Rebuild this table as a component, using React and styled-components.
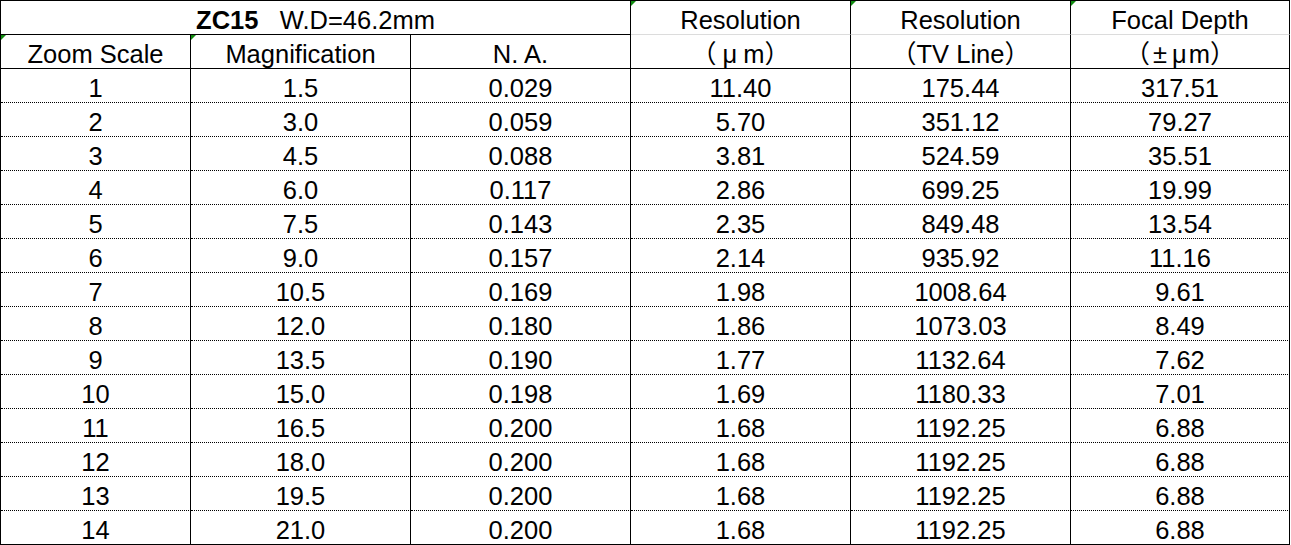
import styled, { createGlobalStyle } from 'styled-components';

const GlobalStyle = createGlobalStyle`
    html, body {
        margin: 0;
        padding: 0;
        background: #ffffff;
    }
`;

const Sheet = styled.div`
    display: grid;
    grid-template-columns: 190px 220px 220px 220px 220px 219px;
    grid-auto-rows: 34px;
    width: max-content;
    border-left: 1px solid #000;
    border-top: 1px solid #000;
    font-family: 'Liberation Sans', 'Noto Sans CJK JP', sans-serif;
    font-size: 25.5px;
    color: #000;
`;

const Cell = styled.div`
    position: relative;
    box-sizing: border-box;
    grid-column: span ${({ $span }) => $span || 1};
    padding-top: 6px;
    line-height: 27px;
    text-align: center;
    white-space: pre;
    border-right: 1px solid #000;
    border-bottom: 1px
        ${({ $line }) => ($line === 'dotted' ? 'dotted #000' : $line === 'grid' ? 'solid #dcdcdc' : 'solid #000')};
`;

const Flag = styled.span`
    position: absolute;
    top: 0;
    left: 0;
    width: 0;
    height: 0;
    border-top: 5px solid #108a10;
    border-right: 5px solid transparent;
`;

const Bold = styled.b`
    font-weight: 700;
`;

const Sym = styled.span`
    padding: 0 ${({ $pad }) => $pad || 4}px;
`;

const rows = [
    ['1', '1.5', '0.029', '11.40', '175.44', '317.51'],
    ['2', '3.0', '0.059', '5.70', '351.12', '79.27'],
    ['3', '4.5', '0.088', '3.81', '524.59', '35.51'],
    ['4', '6.0', '0.117', '2.86', '699.25', '19.99'],
    ['5', '7.5', '0.143', '2.35', '849.48', '13.54'],
    ['6', '9.0', '0.157', '2.14', '935.92', '11.16'],
    ['7', '10.5', '0.169', '1.98', '1008.64', '9.61'],
    ['8', '12.0', '0.180', '1.86', '1073.03', '8.49'],
    ['9', '13.5', '0.190', '1.77', '1132.64', '7.62'],
    ['10', '15.0', '0.198', '1.69', '1180.33', '7.01'],
    ['11', '16.5', '0.200', '1.68', '1192.25', '6.88'],
    ['12', '18.0', '0.200', '1.68', '1192.25', '6.88'],
    ['13', '19.5', '0.200', '1.68', '1192.25', '6.88'],
    ['14', '21.0', '0.200', '1.68', '1192.25', '6.88'],
];

export default function App() {
    return (
        <>
            <GlobalStyle />
            <Sheet>
                <Cell $span={3}>
                    <Bold>ZC15</Bold>{'   W.D=46.2mm'}
                </Cell>
                <Cell $line="grid">
                    <Flag />
                    Resolution
                </Cell>
                <Cell $line="grid">
                    <Flag />
                    Resolution
                </Cell>
                <Cell $line="grid">
                    <Flag />
                    Focal Depth
                </Cell>

                <Cell>
                    <Flag />
                    Zoom Scale
                </Cell>
                <Cell>
                    <Flag />
                    Magnification
                </Cell>
                <Cell>N. A.</Cell>
                <Cell>
                    （<Sym $pad={6}>μ</Sym>m）
                </Cell>
                <Cell>（TV Line）</Cell>
                <Cell>
                    （<Sym $pad={3}>±</Sym>
                    <Sym $pad={2}>μ</Sym>m）
                </Cell>

                {rows.map((row, r) =>
                    row.map((v, c) => (
                        <Cell key={`${r}-${c}`} $line={r === rows.length - 1 ? 'solid' : 'dotted'}>
                            {v}
                        </Cell>
                    ))
                )}
            </Sheet>
        </>
    );
}
